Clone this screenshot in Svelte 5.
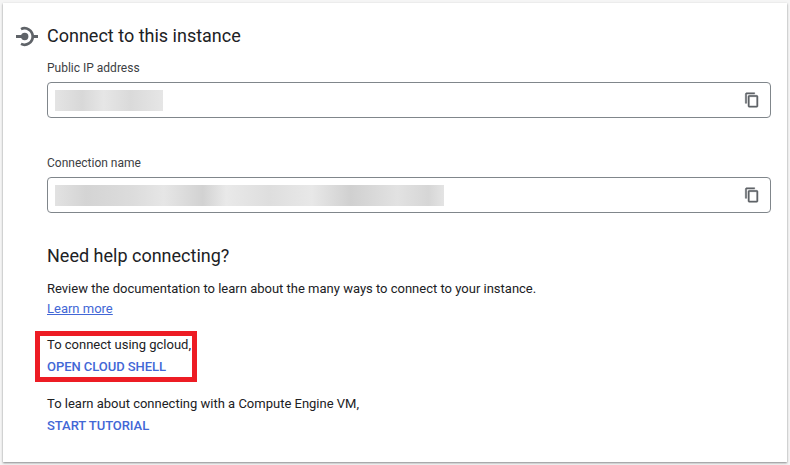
<script>
  const fields = [
    { label: 'Public IP address', cls: 'short' },
    { label: 'Connection name', cls: 'long' }
  ];
</script>

<div class="page">
  <section class="card">
    <header class="head">
      <svg class="plug" width="24" height="24" viewBox="0 0 24 24" aria-hidden="true">
        <path d="M0 11h6v3H0z" fill="#5f6368"/>
        <circle cx="8.700" cy="12.500" r="3.700" fill="#5f6368"/>
        <path d="M17 11h5v3h-5z" fill="#5f6368"/>
        <path d="M5 5.100A8.200 8.200 0 1 1 5 19.900" fill="none" stroke="#5f6368" stroke-width="2.700"/>
      </svg>
      <h2>Connect to this instance</h2>
    </header>

    <div class="body">
      {#each fields as f}
        <div class="field-group">
          <div class="label">{f.label}</div>
          <div class="field">
            <div class="blur {f.cls}"></div>
            <svg class="copy" width="16" height="16" viewBox="0 0 24 24" aria-hidden="true">
              <path d="M16 1H4c-1.100 0-2 .9-2 2v14h2V3h12V1zm3 4H8c-1.100 0-2 .9-2 2v14c0 1.100.9 2 2 2h11c1.100 0 2-.9 2-2V7c0-1.100-.9-2-2-2zm0 16H8V7h11v14z" fill="#5f6368" stroke="#5f6368" stroke-width=".7"/>
            </svg>
          </div>
        </div>
      {/each}

      <h2 class="help">Need help connecting?</h2>
      <p class="doc">Review the documentation to learn about the many ways to connect to your instance.</p>
      <a class="learn" href="#learn">Learn more</a>

      <div class="action first">
        <p>To connect using gcloud,</p>
        <a class="btn" href="#shell">OPEN CLOUD SHELL</a>
        <span class="highlight"></span>
      </div>
      <div class="action second">
        <p>To learn about connecting with a Compute Engine VM,</p>
        <a class="btn" href="#tutorial">START TUTORIAL</a>
      </div>
    </div>
  </section>
</div>

<style>
  :global(body) {
    margin: 0;
    background: #f5f5f5;
  }
  .page {
    width: 790px;
    height: 465px;
    padding: 3px;
    box-sizing: border-box;
    font-family: Roboto, "Liberation Sans", sans-serif;
    color: #202124;
    overflow: hidden;
  }
  .card {
    height: 459px;
    width: 784px;
    box-sizing: border-box;
    background: #fff;
    box-shadow: 0 1px 2px rgba(60, 64, 67, .6);
    padding-top: 22px;
  }
  .head {
    display: flex;
    align-items: center;
    height: 22px;
    padding-left: 13px;
  }
  .plug {
    width: 24px;
    height: 24px;
    margin-right: 7px;
    flex: none;
  }
  h2 {
    margin: 0;
    font-size: 18px;
    line-height: 22px;
    font-weight: 400;
    color: #202124;
  }
  .body {
    padding: 0 16px 0 44px;
  }
  .field-group {
    height: 90px;
  }
  .field-group:first-child {
    height: 95px;
    padding-top: 13px;
  }
  .label {
    font-size: 12px;
    line-height: 16px;
    color: #3c4043;
    margin-bottom: 6px;
  }
  .field {
    height: 36px;
    box-sizing: border-box;
    border: 1px solid #80868b;
    border-radius: 4px;
    display: flex;
    align-items: center;
    justify-content: space-between;
    padding: 0 10px 0 7px;
  }
  .blur {
    height: 21px;
    background: linear-gradient(90deg, #e4e4e4, #d8d8d8 25%, #e6e6e6 45%, #dadada 70%, #e6e6e6);
  }
  .short { width: 108px; }
  .long {
    width: 389px;
    background: linear-gradient(90deg, #e2e2e2, #d4d4d4 8%, #dcdcdc 20%, #e6e6e6 28%, #d2d2d2 38%, #e9e9e9 44%, #dedede 55%, #e8e8e8 66%, #d0d0d0 76%, #e2e2e2 88%, #d6d6d6 96%, #e4e4e4);
  }
  p {
    margin: 0;
    font-size: 13px;
    line-height: 20px;
    color: #202124;
  }
  .doc { margin-top: 12px; }
  .learn {
    display: block;
    font-size: 13px;
    line-height: 20px;
    color: #4267d6;
    text-decoration: underline;
    width: max-content;
  }
  .action {
    position: relative;
    width: max-content;
  }
  .first { margin-top: 16px; }
  .second { margin-top: 17px; }
  .btn {
    display: block;
    font-size: 13px;
    line-height: 20px;
    margin-top: 2px;
    font-weight: 500;
    letter-spacing: -.05px;
    color: #4267d6;
    text-decoration: none;
    width: max-content;
  }
  .highlight {
    position: absolute;
    left: -12px;
    top: -4px;
    width: 162px;
    height: 51px;
    box-sizing: border-box;
    border: 5px solid #ed1c24;
  }
</style>
